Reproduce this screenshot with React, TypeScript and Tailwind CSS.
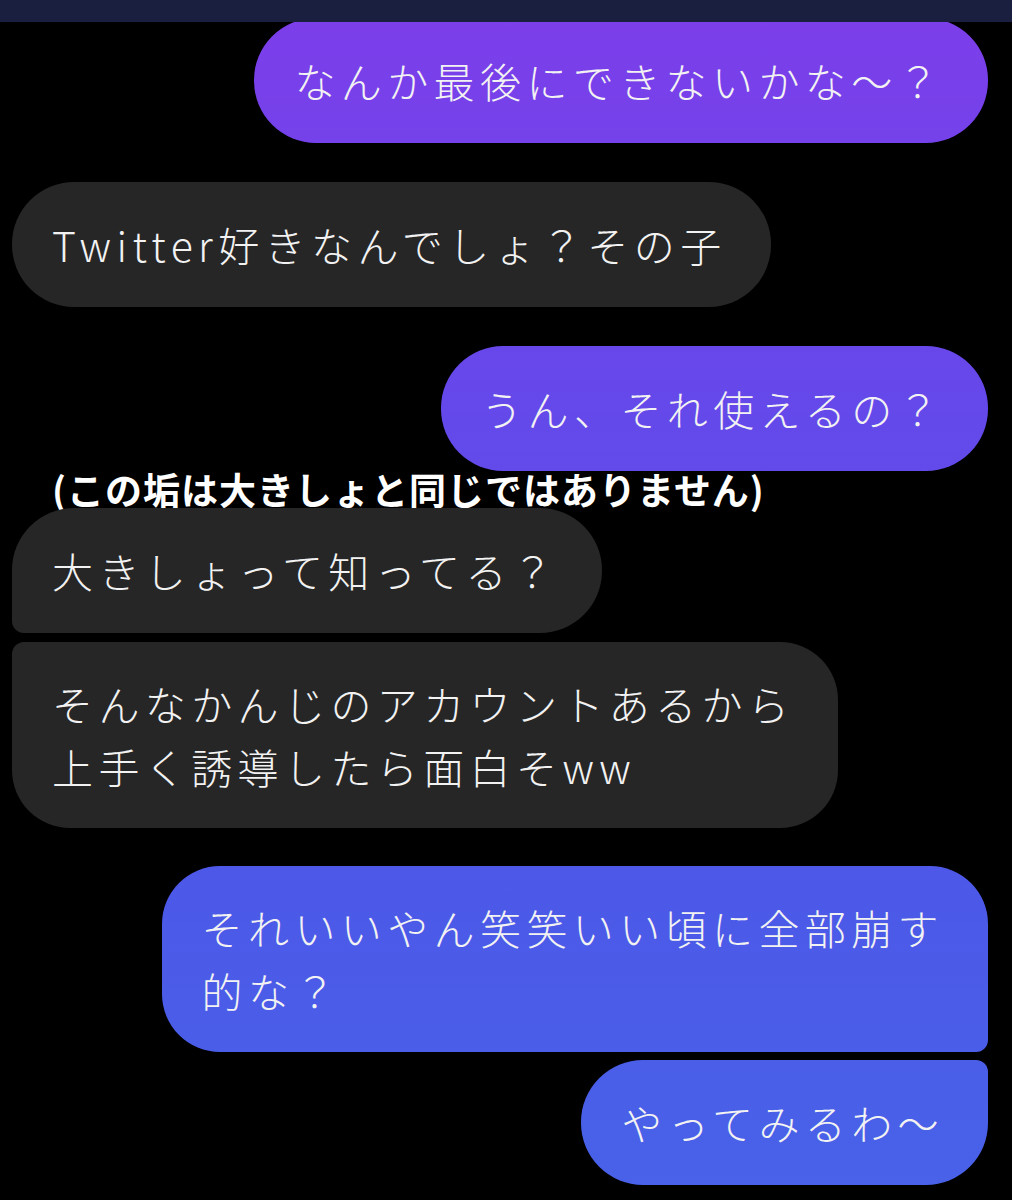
type Msg = {
  id: number;
  mine: boolean;
  lines: string[];
  corners: string;
  gap: string;
};

const messages: Msg[] = [
  { id: 1, mine: true, lines: ['なんか最後にできないかな〜？'], corners: 'rounded-[62px]', gap: '-mt-[4px]' },
  { id: 2, mine: false, lines: ['Twitter好きなんでしょ？その子'], corners: 'rounded-[62px]', gap: 'mt-[39px]' },
  { id: 3, mine: true, lines: ['うん、それ使えるの？'], corners: 'rounded-[62px]', gap: 'mt-[39px]' },
];

const rest: Msg[] = [
  { id: 4, mine: false, lines: ['大きしょって知ってる？'], corners: 'rounded-[62px] rounded-bl-[12px]', gap: '' },
  {
    id: 5,
    mine: false,
    lines: ['そんなかんじのアカウントあるから', '上手く誘導したら面白そww'],
    corners: 'rounded-[58px] rounded-tl-[12px]',
    gap: 'mt-[9px]',
  },
  {
    id: 6,
    mine: true,
    lines: ['それいいやん笑笑いい頃に全部崩す', '的な？'],
    corners: 'rounded-[58px] rounded-br-[12px]',
    gap: 'mt-[38px]',
  },
  { id: 7, mine: true, lines: ['やってみるわ〜'], corners: 'rounded-[62px] rounded-tr-[12px]', gap: 'mt-[8px]' },
];

function Bubble({ msg }: { msg: Msg }) {
  const tone = msg.mine
    ? 'self-end bg-fixed bg-[linear-gradient(180deg,#7d3eea_0%,#6449ea_35%,#4c59e8_75%,#4862e8_100%)]'
    : 'self-start bg-[#262626]';
  const pad = msg.lines.length > 1 ? 'py-[30px]' : 'py-[31px]';
  return (
    <div
      className={`${tone} ${msg.corners} ${msg.gap} ${pad} pl-[40px] pr-[44px] text-[41px] font-light leading-[63px] tracking-[5.4px] text-[#f2f2f2]`}
    >
      {msg.lines.map((l, i) => (
        <div key={i} className="whitespace-nowrap">
          {l}
        </div>
      ))}
    </div>
  );
}

export default function App() {
  return (
    <div className="min-h-[1200px] w-[1012px] overflow-hidden bg-black font-['Noto_Sans_CJK_JP','Noto_Sans',sans-serif]">
      {/* top strip */}
      <div className="relative z-10 h-[22px] bg-[#1b1f3f]" />

      <div className="flex flex-col pl-[12px] pr-[24px]">
        {messages.map((m) => (
          <Bubble key={m.id} msg={m} />
        ))}

        {/* caption overlay */}
        <p className="h-[37px] pl-[40px] text-[37px] font-bold leading-[37px] tracking-[1px] text-white">
          (この垢は大きしょと同じではありません)
        </p>

        {rest.map((m) => (
          <Bubble key={m.id} msg={m} />
        ))}
      </div>
    </div>
  );
}
